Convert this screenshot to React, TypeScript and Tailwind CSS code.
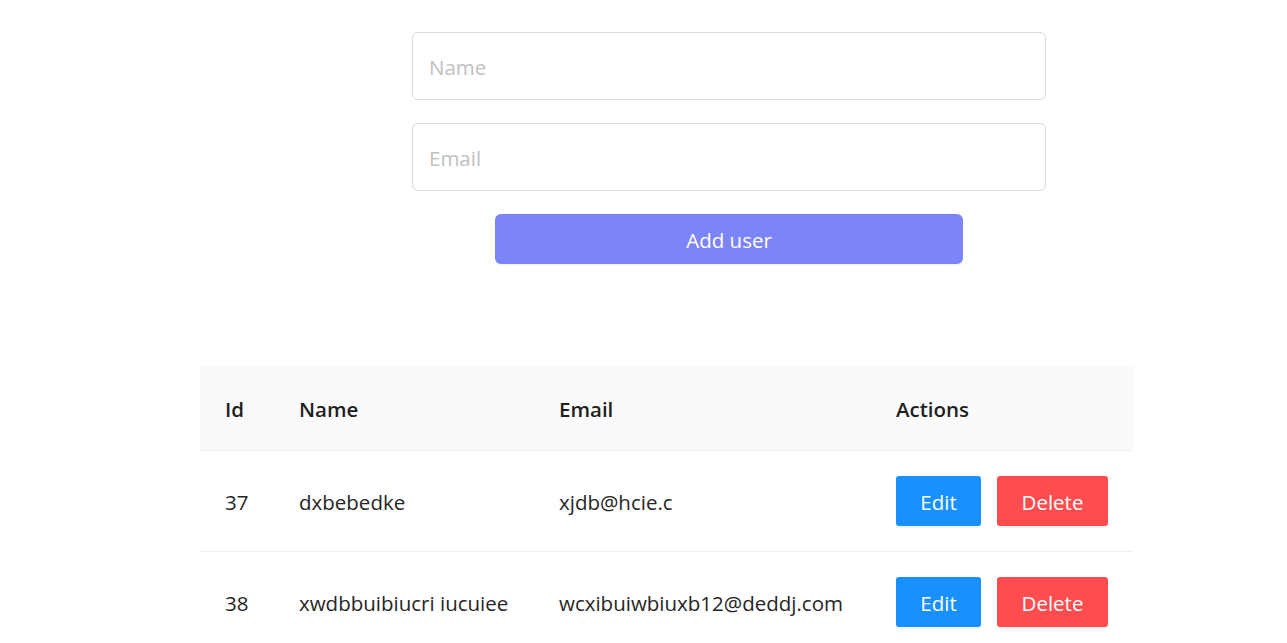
const users = [
  { id: 37, name: 'dxbebedke', email: 'xjdb@hcie.c' },
  { id: 38, name: 'xwdbbuibiucri iucuiee', email: 'wcxibuiwbiuxb12@deddj.com' },
];

export default function App() {
  return (
    <div className="min-h-screen bg-white font-['Open_Sans',sans-serif] text-[20.5px] text-[#262626]">
      {/* Form */}
      <div className="ml-[412px] flex w-[634px] flex-col pt-[32px]">
        <input
          placeholder="Name"
          className="h-[68px] rounded-[6px] border border-[#d9d9d9] px-4 pt-[1px] text-[20.5px] outline-none placeholder:text-[#bfbfbf]"
        />
        <input
          placeholder="Email"
          className="mt-[23px] h-[68px] rounded-[6px] border border-[#d9d9d9] px-4 pt-[1px] text-[20.5px] outline-none placeholder:text-[#bfbfbf]"
        />
        <button className="mx-auto mt-[23px] h-[50px] w-[468px] rounded-[6px] bg-[#7c85f8] pt-[2px] text-white shadow-[0_2px_0_rgba(0,0,0,0.04)]">
          Add user
        </button>
      </div>

      {/* Table */}
      <div className="ml-[200px] mt-[102px] w-[933px]">
        <div className="grid h-[85px] grid-cols-[74px_260px_337px_262px] items-center border-b border-[#f0f0f0] bg-[#fafafa] pt-0.5 font-semibold text-[#1f1f1f]">
          <div className="pl-[25px]">Id</div>
          <div className="pl-[25px]">Name</div>
          <div className="pl-[25px]">Email</div>
          <div className="pl-[25px]">Actions</div>
        </div>
        {users.map((u) => (
          <div
            key={u.id}
            className="grid h-[101px] grid-cols-[74px_260px_337px_262px] items-center border-b border-[#f0f0f0]"
          >
            <div className="pl-[25px] pt-0.5">{u.id}</div>
            <div className="pl-[25px] pt-0.5">{u.name}</div>
            <div className="pl-[25px] pt-0.5">{u.email}</div>
            <div className="flex gap-4 pl-[25px]">
              <button className="h-[50px] w-[85px] rounded-[3px] bg-[#1890ff] pt-[2px] text-white shadow-[0_2px_0_rgba(0,0,0,0.045)]">
                Edit
              </button>
              <button className="h-[50px] w-[111px] rounded-[3px] bg-[#ff4d4f] pt-[2px] text-white shadow-[0_2px_0_rgba(0,0,0,0.045)]">
                Delete
              </button>
            </div>
          </div>
        ))}
      </div>
    </div>
  );
}
